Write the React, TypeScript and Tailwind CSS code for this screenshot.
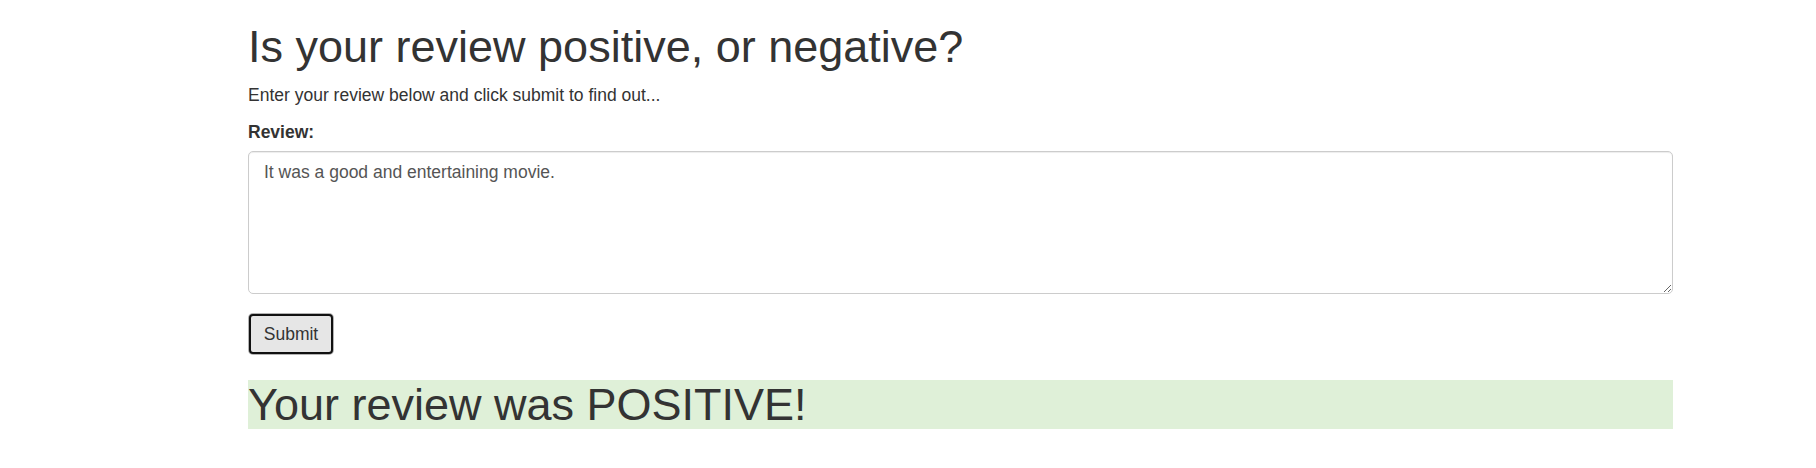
import { useState } from 'react';

export default function App() {
  const [review, setReview] = useState<string>('It was a good and entertaining movie.');

  return (
    <div className="min-h-[468px] bg-white text-[#333] font-['Liberation_Sans',Arial,sans-serif] text-[17.5px] leading-[25px]">
      <div className="ml-[248px] w-[1425px] pt-[22px]">
        <h1 className="text-[45px] leading-[49.5px] font-normal mb-[11.5px]">Is your review positive, or negative?</h1>
        <p className="mb-[12px]">Enter your review below and click submit to find out...</p>

        <form className="flex flex-col items-start" onSubmit={(e) => e.preventDefault()}>
          <label htmlFor="review" className="font-bold mb-[6px]">
            Review:
          </label>
          <textarea
            id="review"
            rows={5}
            value={review}
            onChange={(e) => setReview(e.target.value)}
            className="block w-full h-[143px] border border-[#ccc] rounded-[5px] px-[15px] py-[7.5px] text-[#555] text-[17.5px] leading-[25px] shadow-[inset_0_1px_1px_rgba(0,0,0,0.075)] outline-none resize-y"
          />
          <button
            type="submit"
            className="mt-[20px] ml-[1px] w-[84px] h-[40px] rounded-[4px] border-2 border-[#111] bg-[#e6e6e6] text-[#333] text-[17.5px] leading-[25px] shadow-[0_0_0_1px_#b3b3b3]"
          >
            Submit
          </button>
        </form>

        <h1 className="mt-[26px] bg-[#dff0d8] text-[45px] leading-[49px] font-normal">Your review was POSITIVE!</h1>
      </div>
    </div>
  );
}
